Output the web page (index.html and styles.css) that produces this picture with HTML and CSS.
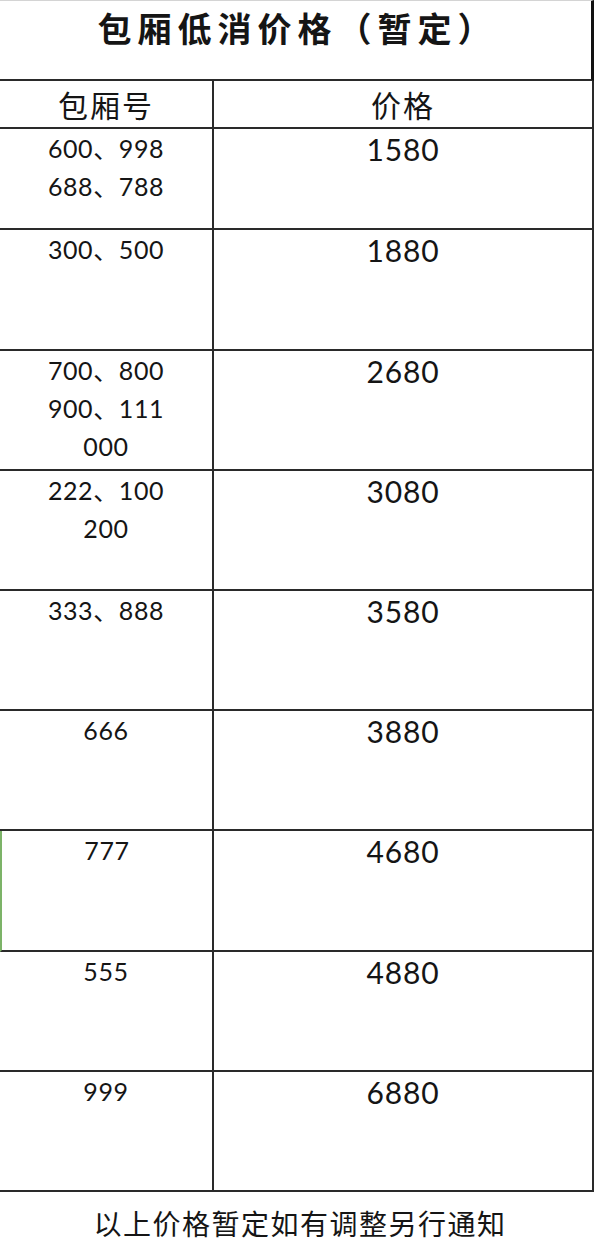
FILE: index.html
```html
<!DOCTYPE html>
<html lang="zh-CN">
<head>
<meta charset="utf-8">
<title>包厢低消价格（暂定）</title>
<link rel="stylesheet" href="styles.css">
</head>
<body>
<div class="sheet">
  <div class="title">包厢低消价格（暂定）</div>
  <div class="row head">
    <div class="cell room">包厢号</div>
    <div class="cell price">价格</div>
  </div>
  <div class="row r1">
    <div class="cell room"><div>600、998</div><div>688、788</div></div>
    <div class="cell price">1580</div>
  </div>
  <div class="row r2">
    <div class="cell room"><div>300、500</div></div>
    <div class="cell price">1880</div>
  </div>
  <div class="row">
    <div class="cell room"><div>700、800</div><div>900、111</div><div>000</div></div>
    <div class="cell price">2680</div>
  </div>
  <div class="row">
    <div class="cell room"><div>222、100</div><div>200</div></div>
    <div class="cell price">3080</div>
  </div>
  <div class="row">
    <div class="cell room"><div>333、888</div></div>
    <div class="cell price">3580</div>
  </div>
  <div class="row">
    <div class="cell room"><div>666</div></div>
    <div class="cell price">3880</div>
  </div>
  <div class="row r2 mark">
    <div class="cell room"><div>777</div></div>
    <div class="cell price">4680</div>
  </div>
  <div class="row">
    <div class="cell room"><div>555</div></div>
    <div class="cell price">4880</div>
  </div>
  <div class="row">
    <div class="cell room"><div>999</div></div>
    <div class="cell price">6880</div>
  </div>
  <div class="note">以上价格暂定如有调整另行通知</div>
</div>
</body>
</html>
```

FILE: styles.css
```css
html, body {
  margin: 0;
  padding: 0;
  background: #ffffff;
}

.sheet {
  width: 594px;
  color: #151515;
  font-family: "Noto Sans CJK SC", "Noto Sans", sans-serif;
}

.title {
  box-sizing: border-box;
  height: 81px;
  border-top: 1px solid #d4d4d4;
  border-bottom: 2px solid #2a2a2a;
  border-right: 3px solid #111111;
  padding: 5px 0 0 4px;
  text-align: center;
  font-size: 34px;
  font-weight: 700;
  line-height: 44px;
  letter-spacing: 6px;
}

.row {
  box-sizing: border-box;
  display: flex;
  height: 120px;
  border-bottom: 2px solid #2a2a2a;
  border-right: 2px solid #2a2a2a;
}

.row.head {
  height: 48px;
}

.row.r1 {
  height: 101px;
}

.row.r2 {
  height: 121px;
}

.row.mark {
  border-left: 2px solid #7cb368;
}

.cell {
  box-sizing: border-box;
  text-align: center;
}

.room {
  width: 214px;
  flex: none;
  border-right: 2px solid #2a2a2a;
  font-family: "Lato", "Noto Sans CJK SC", sans-serif;
  font-size: 25px;
  line-height: 38px;
  letter-spacing: 0.6px;
}

.mark .room {
  width: 212px;
}

.price {
  flex: 1;
  padding-top: 2px;
  font-family: "Lato", "Noto Sans CJK SC", sans-serif;
  font-size: 30px;
  line-height: 36px;
  letter-spacing: 0.8px;
}

.head .cell {
  display: flex;
  align-items: center;
  justify-content: center;
  padding-top: 0;
  font-family: "Noto Sans CJK SC", sans-serif;
  font-size: 30px;
  line-height: 36px;
  letter-spacing: 2px;
}

.note {
  height: 62px;
  display: flex;
  align-items: center;
  justify-content: center;
  width: 600px;
  font-size: 28px;
  letter-spacing: 1.5px;
}
```
